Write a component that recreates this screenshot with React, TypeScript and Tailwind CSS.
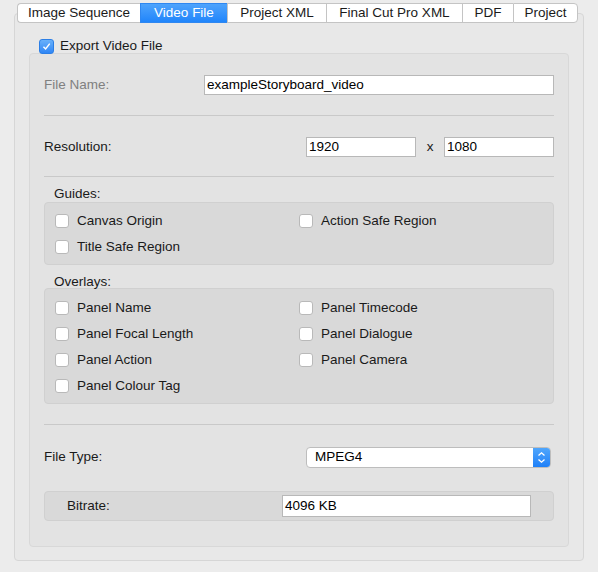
import React from "react";

const font = { fontFamily: '"Liberation Sans", Arial, sans-serif' };

const tabs = [
  { label: "Image Sequence", w: "w-[123px]" },
  { label: "Video File", w: "w-[87px]", active: true },
  { label: "Project XML", w: "w-[99px]" },
  { label: "Final Cut Pro XML", w: "w-[136px]" },
  { label: "PDF", w: "w-[51px]" },
  { label: "Project", w: "w-[65px]" },
];

const Box = ({ checked = false }: { checked?: boolean }) =>
  checked ? (
    <span className="w-[15px] h-[15px] rounded-[3px] bg-gradient-to-b from-[#69b1fa] to-[#2f86f5] border border-[#2c7fe6] grid place-items-center shrink-0">
      <svg width="9" height="9" viewBox="0 0 10 10">
        <path d="M1.6 5.4 L4 7.8 L8.6 1.8" fill="none" stroke="white" strokeWidth="1.6" />
      </svg>
    </span>
  ) : (
    <span className="w-[14px] h-[14px] rounded-[3px] bg-white border border-[#b9b9b9] shrink-0" />
  );

const Check = ({ label }: { label: string }) => (
  <div className="flex items-center gap-[8px] h-[26px]">
    <Box />
    <span className="text-[13.5px] text-[#1a1a1a]">{label}</span>
  </div>
);

const Field = ({ value, className }: { value: string; className: string }) => (
  <div
    className={`h-[20px] bg-white border border-[#b8b8b8] flex items-center pl-[2px] text-[13.5px] text-black ${className}`}
  >
    {value}
  </div>
);

const Sep = () => <div className="h-px bg-[#c9c9c9]" />;

export default function App() {
  return (
    <div className="w-[598px] h-[572px] bg-[#ececec] pt-[3px]" style={font}>
      <div className="flex ml-[17px] relative z-10">
        {tabs.map((t, i) => (
          <div
            key={t.label}
            className={`${t.w} h-[20px] flex items-center justify-center text-[13.5px] border-y ${
              i === 0 ? "rounded-l-[4px] border-l" : "border-l"
            } ${i === tabs.length - 1 ? "rounded-r-[4px] border-r" : ""} ${
              t.active
                ? "bg-gradient-to-b from-[#4da3fc] to-[#1f85fb] text-white border-[#2f87f0]"
                : "bg-white text-[#1a1a1a] border-[#c4c4c4]"
            }`}
          >
            {t.label}
          </div>
        ))}
      </div>
      <div className="ml-[14px] -mt-[10px] w-[570px] h-[548px] bg-[#e8e8e8] border border-[#d6d6d6] rounded-[4px] pt-[24px] px-[14px]">
        <div className="flex items-center gap-[6px] ml-[10px] h-[16px]">
          <Box checked />
          <span className="text-[13.5px] text-[#1a1a1a]">Export Video File</span>
        </div>
        <div className="-mt-[1px] h-[494px] bg-[#e3e3e3] border border-[#d8d8d8] rounded-[4px] px-[14px] pt-[21px]">
          <div className="flex items-center h-[20px]">
            <span className="w-[160px] text-[13.5px] text-[#808080]">File Name:</span>
            <Field value="exampleStoryboard_video" className="flex-1" />
          </div>
          <div className="h-[20px]" />
          <Sep />
          <div className="h-[21px]" />
          <div className="flex items-center h-[20px]">
            <span className="w-[262px] text-[13.5px] text-[#1a1a1a]">Resolution:</span>
            <Field value="1920" className="w-[110px]" />
            <span className="w-[28px] text-center text-[13.5px] text-[#1a1a1a]">x</span>
            <Field value="1080" className="flex-1" />
          </div>
          <div className="h-[19px]" />
          <Sep />
          <div className="h-[9px]" />
          <div className="pl-[10px] h-[16px] flex items-center text-[13.5px] text-[#1a1a1a]">Guides:</div>
          <div className="h-[63px] bg-[#d9d9d9] border border-[#d0d0d0] rounded-[4px] pl-[10px] pt-[5px] grid grid-cols-[244px_1fr] content-start">
            <Check label="Canvas Origin" />
            <Check label="Action Safe Region" />
            <Check label="Title Safe Region" />
          </div>
          <div className="h-[11px]" />
          <div className="pl-[10px] h-[12px] flex items-center text-[13.5px] text-[#1a1a1a]">Overlays:</div>
          <div className="h-[116px] bg-[#d9d9d9] border border-[#d0d0d0] rounded-[4px] pl-[10px] pt-[6px] grid grid-cols-[244px_1fr] content-start">
            <Check label="Panel Name" />
            <Check label="Panel Timecode" />
            <Check label="Panel Focal Length" />
            <Check label="Panel Dialogue" />
            <Check label="Panel Action" />
            <Check label="Panel Camera" />
            <Check label="Panel Colour Tag" />
          </div>
          <div className="h-[20px]" />
          <Sep />
          <div className="h-[22px]" />
          <div className="flex items-center h-[21px]">
            <span className="w-[262px] text-[13.5px] text-[#1a1a1a]">File Type:</span>
            <div className="w-[245px] h-[21px] bg-white border border-[#bdbdbd] rounded-[4px] flex items-center overflow-hidden">
              <span className="flex-1 pl-[8px] text-[13.5px] text-black">MPEG4</span>
              <span className="w-[17px] h-full bg-gradient-to-b from-[#4fa6fc] to-[#1e80f8] grid place-items-center">
                <svg width="9" height="13" viewBox="0 0 9 13">
                  <path d="M1.5 4.5 L4.5 1.8 L7.5 4.5 M1.5 8.5 L4.5 11.2 L7.5 8.5" fill="none" stroke="white" strokeWidth="1.3" />
                </svg>
              </span>
            </div>
          </div>
          <div className="h-[23px]" />
          <div className="h-[30px] bg-[#d9d9d9] border border-[#d0d0d0] rounded-[4px] flex items-center pl-[22px] pr-[22px]">
            <span className="w-[215px] text-[13.5px] text-[#1a1a1a]">Bitrate:</span>
            <Field value="4096 KB" className="flex-1 h-[22px]" />
          </div>
        </div>
      </div>
    </div>
  );
}
